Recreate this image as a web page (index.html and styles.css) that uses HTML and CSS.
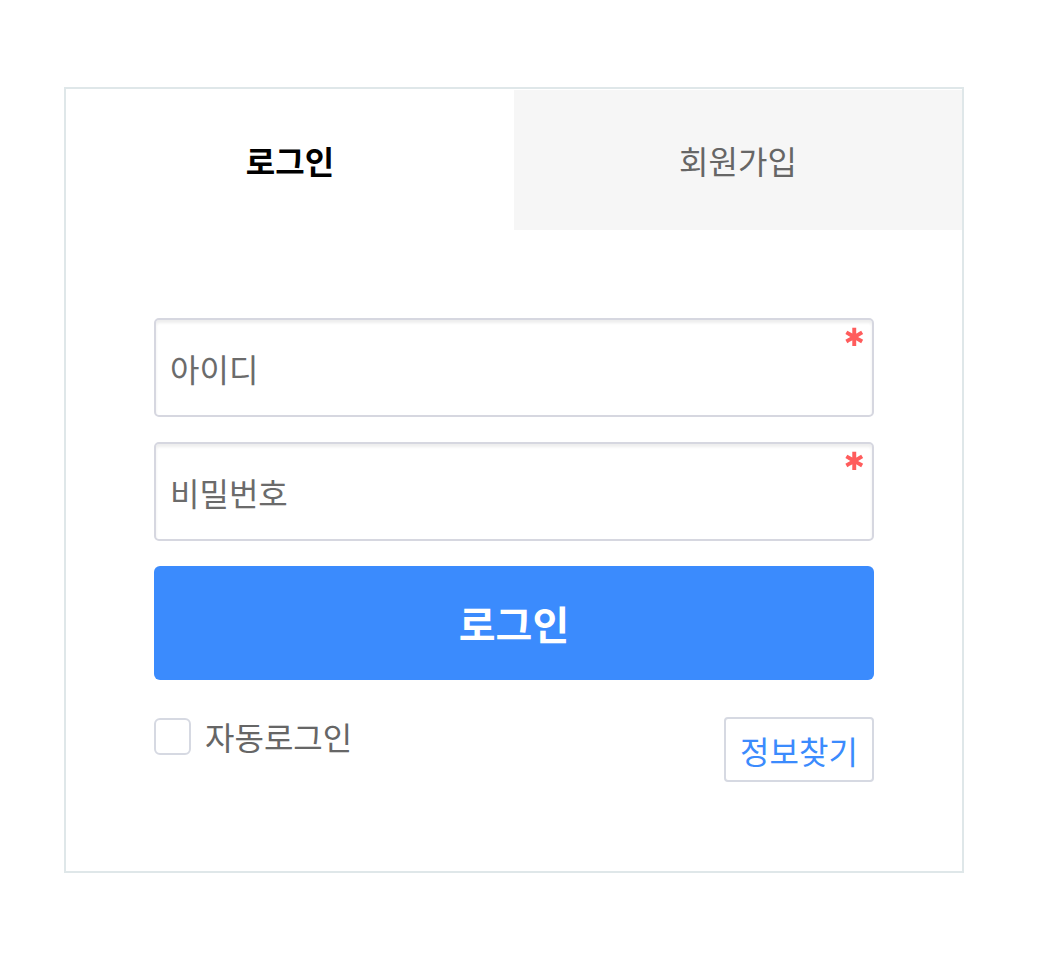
FILE: index.html
```html
<!DOCTYPE html>
<html lang="ko">
<head>
    <meta charset="UTF-8">
    <meta name="viewport" content="width=device-width, initial-scale=1.0">
    <title>로그인</title>
    <link rel="stylesheet" href="styles.css">
</head>
<body>
    <div class="login-box">
        <div class="tabs">
            <div class="tab active">로그인</div>
            <div class="tab">회원가입</div>
        </div>

        <form class="login-form">
            <div class="field">
                <input type="text" placeholder="아이디">
                <span class="required">✱</span>
            </div>
            <div class="field">
                <input type="password" placeholder="비밀번호">
                <span class="required">✱</span>
            </div>

            <button type="button" class="btn-login">로그인</button>

            <div class="form-bottom">
                <label class="auto-login">
                    <span class="check"></span>
                    자동로그인
                </label>
                <button type="button" class="btn-find">정보찾기</button>
            </div>
        </form>
    </div>
</body>
</html>
```

FILE: styles.css
```css
body {
    margin: 0;
    padding: 87px 0 0 64px;
    font-family: "Noto Sans CJK KR", "Noto Sans", sans-serif;
    background: #fff;
}

.login-box {
    width: 900px;
    box-sizing: border-box;
    border: 2px solid #dfe7e9;
}

.tabs {
    display: flex;
}

.tab {
    flex: 1;
    height: 140px;
    display: flex;
    align-items: center;
    justify-content: center;
    font-size: 32px;
    color: #666;
    background: #f6f6f6;
    border-top: 1px solid #fff;
}

.tab.active {
    background: #fff;
    color: #000;
    font-weight: 700;
}

.login-form {
    padding: 88px 88px 89px;
    display: flex;
    flex-direction: column;
}

.field {
    position: relative;
    margin-bottom: 25px;
}

.field input {
    display: block;
    width: 100%;
    height: 99px;
    box-sizing: border-box;
    border: 2px solid #d6d7e0;
    border-radius: 5px;
    box-shadow: inset 0 3px 3px rgba(0, 0, 0, 0.07);
    padding: 0 14px;
    font-family: inherit;
    font-size: 32px;
    color: #333;
    outline: none;
}

.field input::placeholder {
    color: #6b6b6b;
}

.required {
    position: absolute;
    top: 7px;
    right: 9px;
    font-family: "DejaVu Sans", sans-serif;
    font-weight: 700;
    font-size: 25px;
    line-height: 1;
    color: #ff5c5c;
    filter: blur(0.5px);
}

.btn-login {
    height: 114px;
    border: none;
    border-radius: 6px;
    background: #3b8bfd;
    color: #fff;
    font-family: inherit;
    font-size: 40px;
    font-weight: 700;
    cursor: pointer;
}

.form-bottom {
    display: flex;
    justify-content: space-between;
    align-items: flex-start;
    margin-top: 37px;
}

.auto-login {
    display: flex;
    align-items: center;
    gap: 14px;
    font-size: 32px;
    color: #666;
    line-height: 38px;
}

.check {
    width: 37px;
    height: 37px;
    box-sizing: border-box;
    border: 2px solid #d6d9e2;
    border-radius: 6px;
}

.btn-find {
    width: 150px;
    height: 65px;
    box-sizing: border-box;
    border: 2px solid #d6d9e2;
    border-radius: 4px;
    background: #fff;
    color: #3b8bfd;
    font-family: inherit;
    font-size: 32px;
    padding: 0;
    cursor: pointer;
}
```
